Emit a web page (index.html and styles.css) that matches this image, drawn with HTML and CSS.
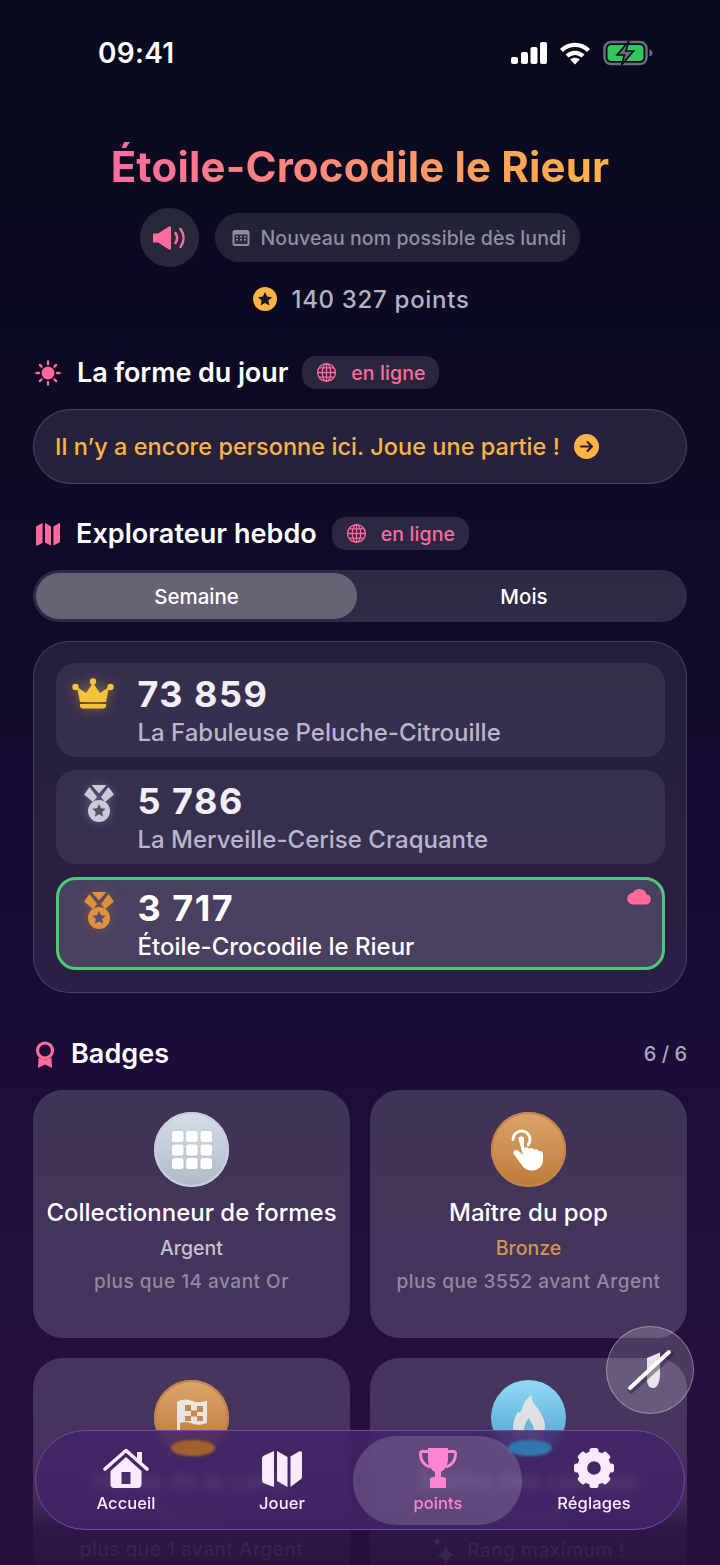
FILE: index.html
```html
<!DOCTYPE html>
<html lang="fr">
<head>
<meta charset="utf-8">
<title>Points</title>
<link rel="stylesheet" href="styles.css">
</head>
<body>
<svg class="defs" width="0" height="0" aria-hidden="true">
  <symbol id="star" viewBox="0 0 24 24"><path d="M12 1.500l3.200 6.900 7.500.9-5.600 5.100 1.500 7.400L12 18.100l-6.600 3.700 1.500-7.400L1.300 9.300l7.500-.9z"/></symbol>
  <symbol id="globe" viewBox="0 0 24 24"><g fill="none" stroke="currentColor" stroke-width="1.500"><circle cx="12" cy="12" r="10.200"/><ellipse cx="12" cy="12" rx="4.800" ry="10.200"/><path d="M12 1.800v20.400M1.800 12h20.400M3.400 6.800h17.200M3.400 17.200h17.200"/></g></symbol>
  <symbol id="medal" viewBox="0 0 30 37"><path d="M7.500 0h15L15 8.500z" fill="currentColor"/><path d="M5.500 2 13 12l-4 5-8.500-7q-.5-.5 0-1z" fill="currentColor"/><path d="M24.500 2 17 12l4 5 8.500-7q.5-.5 0-1z" fill="currentColor"/><circle cx="15" cy="26" r="11" fill="currentColor"/><use href="#star" x="7.500" y="18" width="15" height="15" class="medal-star"/></symbol>
</svg>

<div class="app">
  <header class="status">
    <span class="time">09:41</span>
    <div class="status-icons">
      <svg width="36" height="22" viewBox="0 0 36 22" fill="#fff"><rect x="0" y="15" width="7" height="7" rx="2"/><rect x="10" y="10" width="7" height="12" rx="2"/><rect x="19.500" y="5" width="7" height="17" rx="2"/><rect x="29" y="0" width="7" height="22" rx="2"/></svg>
      <svg width="32" height="24" viewBox="0 0 32 24"><g fill="none" stroke="#fff" stroke-width="4.300" stroke-linecap="butt"><path d="M2.500 9.500C10 2 22 2 29.500 9.500"/><path d="M8 15c4.500-4.300 11.500-4.300 16 0"/></g><path d="M16 23.500l-4.800-5c2.800-2.400 6.800-2.400 9.600 0z" fill="#fff"/></svg>
      <svg width="50" height="26" viewBox="0 0 50 26"><rect x="1.500" y="2" width="42" height="22" rx="6.500" fill="none" stroke="#6b6e78" stroke-width="2.500"/><rect x="4.500" y="5" width="36" height="16" rx="4" fill="#34c759"/><path d="M46.500 9.500c2 .6 3 2 3 3.500s-1 2.900-3 3.500z" fill="#6b6e78"/><path d="M26 1l-12 14h7.500l-3 10 12-14h-7.500z" fill="#6a6c74" stroke="#0a0a1e" stroke-width="1.600"/></svg>
    </div>
  </header>

  <main class="main">
    <h1 class="title">Étoile-Crocodile le Rieur</h1>

    <div class="name-row">
      <div class="sound">
        <svg width="33" height="26" viewBox="0 0 33 26"><path d="M1 8.500h4L16 1.500c1-.6 2 0 2 1.200v20.600c0 1.200-1 1.800-2 1.200L5 17.500H1c-.6 0-1-.4-1-1v-7c0-.6.400-1 1-1z" fill="#ff6b9d"/><g fill="none" stroke="#ff6b9d" stroke-width="2.600" stroke-linecap="round"><path d="M22.500 8c2 3 2 7 0 10"/><path d="M27.500 4c4 5.500 4 12.500 0 18"/></g></svg>
      </div>
      <div class="name-pill">
        <svg class="cal" width="18" height="18" viewBox="0 0 18 18"><rect x="0.500" y="1" width="17" height="16" rx="2.500" fill="#8d8d9e"/><rect x="2.500" y="5.500" width="13" height="9.500" fill="#2c2a40"/><g fill="#8d8d9e"><rect x="4" y="7" width="2" height="1.500"/><rect x="8" y="7" width="2" height="1.500"/><rect x="12" y="7" width="2" height="1.500"/><rect x="4" y="10" width="2" height="1.500"/><rect x="8" y="10" width="2" height="1.500"/><rect x="12" y="10" width="2" height="1.500"/></g></svg>
        <span>Nouveau nom possible dès lundi</span>
      </div>
    </div>

    <div class="points">
      <span class="coin"><svg width="16" height="16"><use href="#star" width="16" height="16"/></svg></span>
      <span>140 327 points</span>
    </div>

    <section class="sec-head sec-first">
      <svg class="sec-icon" width="26" height="26" viewBox="0 0 26 26"><circle cx="13" cy="13" r="6.500" fill="#ff6b9d"/><g stroke="#ff6b9d" stroke-width="2.400" stroke-linecap="round"><path d="M13 1.500v2.500M13 22v2.500M1.500 13H4M22 13h2.500M4.900 4.900l1.700 1.700M19.400 19.400l1.700 1.700M4.900 21.100l1.700-1.700M19.400 6.600l1.700-1.700"/></g></svg>
      <h2>La forme du jour</h2>
      <span class="online"><svg width="21" height="21"><use href="#globe" width="21" height="21"/></svg><span>en ligne</span></span>
    </section>

    <div class="banner">
      <span>Il n’y a encore personne ici. Joue une partie !</span>
      <span class="go"><svg width="15" height="15" viewBox="0 0 15 15" fill="none" stroke="#241a30" stroke-width="2" stroke-linecap="round" stroke-linejoin="round"><path d="M2 7.500h11M8.500 3l4.500 4.500L8.500 12"/></svg></span>
    </div>

    <section class="sec-head sec-second">
      <svg class="sec-icon map-icon" width="26" height="24" viewBox="0 0 26 24" fill="#ff6b9d"><path d="M1 4.500 7.600 1v19.800L2.500 23.500c-.8.400-1.500 0-1.500-.9z"/><path d="M10 1l6 3.500v19L10 20.500z"/><path d="M18.400 4.500 25 .8v18.500c0 .6-.2 1-.8 1.300l-5.800 3z"/></svg>
      <h2>Explorateur hebdo</h2>
      <span class="online"><svg width="21" height="21"><use href="#globe" width="21" height="21"/></svg><span>en ligne</span></span>
    </section>

    <div class="segment">
      <span class="seg seg-on">Semaine</span>
      <span class="seg seg-off">Mois</span>
    </div>

    <div class="board">
      <div class="rank">
        <span class="rank-icon"><svg class="crown" width="42" height="32" viewBox="0 0 42 32"><path d="M5 9l9 6 7-10 7 10 9-6-3 15H8z" fill="#f5c33b"/><circle cx="3.500" cy="9" r="3.200" fill="#f5c33b"/><circle cx="21" cy="3.500" r="3.200" fill="#f5c33b"/><circle cx="38.500" cy="9" r="3.200" fill="#f5c33b"/><path d="M8 26h26v1.500c0 2-1 3-3 3H11c-2 0-3-1-3-3z" fill="#f5c33b"/></svg></span>
        <div class="rank-text"><div class="score">73 859</div><div class="who">La Fabuleuse Peluche-Citrouille</div></div>
      </div>
      <div class="rank">
        <span class="rank-icon"><svg class="medal silver" width="30" height="37"><use href="#medal" width="30" height="37"/></svg></span>
        <div class="rank-text"><div class="score">5 786</div><div class="who">La Merveille-Cerise Craquante</div></div>
      </div>
      <div class="rank rank-me">
        <span class="rank-icon"><svg class="medal bronze" width="30" height="37"><use href="#medal" width="30" height="37"/></svg></span>
        <div class="rank-text"><div class="score">3 717</div><div class="who who-me">Étoile-Crocodile le Rieur</div></div>
        <svg class="cloud" width="25" height="17" viewBox="0 0 25 17"><path d="M6 16.500h13.500a5.200 5.200 0 0 0 1-10.300A7.500 7.500 0 0 0 6.800 4.800 5.900 5.900 0 0 0 6 16.500z" fill="#ff6b9d"/></svg>
      </div>
    </div>

    <section class="sec-head sec-badges">
      <svg class="sec-icon" width="20" height="28" viewBox="0 0 20 28"><circle cx="10" cy="9.500" r="7.500" fill="none" stroke="#ff6b9d" stroke-width="3.200"/><path d="M3.500 16.500 3 27l7-3.500 7 3.500-.5-10.500c-4 2.500-9 2.500-13 0z" fill="#ff6b9d"/></svg>
      <h2>Badges</h2>
      <span class="count">6 / 6</span>
    </section>

    <div class="badges">
      <article class="badge">
        <div class="disc disc-silver">
          <svg width="40" height="38" viewBox="0 0 40 38" fill="#fff"><rect x="0" y="0" width="11.500" height="11" rx="2.500"/><rect x="14.200" y="0" width="11.500" height="11" rx="2.500"/><rect x="28.500" y="0" width="11.500" height="11" rx="2.500"/><rect x="0" y="13.500" width="11.500" height="11" rx="2.500"/><rect x="14.200" y="13.500" width="11.500" height="11" rx="2.500"/><rect x="28.500" y="13.500" width="11.500" height="11" rx="2.500"/><rect x="0" y="27" width="11.500" height="11" rx="2.500"/><rect x="14.200" y="27" width="11.500" height="11" rx="2.500"/><rect x="28.500" y="27" width="11.500" height="11" rx="2.500"/></svg>
        </div>
        <h3>Collectionneur de formes</h3>
        <p class="tier">Argent</p>
        <p class="hint">plus que 14 avant Or</p>
      </article>
      <article class="badge">
        <div class="disc disc-bronze">
          <svg width="38" height="43" viewBox="0 0 38 43"><path d="M3 11.500a8.500 8.500 0 1 1 15 5.500" fill="none" stroke="#fff" stroke-width="2.800" stroke-linecap="round"/><path d="M8.500 11c0-3.800 5.500-3.800 5.500 0v9.500c.5-2 4.800-1.800 5.200.8.600-2 4.600-1.700 5 1 .8-1.700 4.300-1.200 4.600 1.200.8-1.200 4.200-.7 4.200 2.500v5.500c0 6.500-4.500 11-11 11-5 0-8.500-2.300-11-6.500l-7-9.500c-2-3 1.800-6 4.500-3.500l4.500 4z" fill="#fff"/></svg>
        </div>
        <h3>Maître du pop</h3>
        <p class="tier tier-bronze">Bronze</p>
        <p class="hint">plus que 3552 avant Argent</p>
      </article>
      <article class="badge">
        <div class="disc disc-bronze">
          <svg width="32" height="40" viewBox="0 0 32 40"><path d="M1 4c5-3 10-3 15-1s10 1.500 15-.5V25c-5 2-10 2.500-15 .5s-8-1.500-12-.5V38H1z" fill="#ebe7e3"/><g fill="#c98a50"><rect x="9" y="7" width="6" height="6"/><rect x="21" y="8" width="6" height="6"/><rect x="15" y="12.500" width="6" height="6"/><rect x="9" y="18" width="6" height="5"/><rect x="21" y="18" width="6" height="5"/></g></svg>
        </div>
        <h3>Héros de la carte</h3>
        <p class="tier tier-bronze">Bronze</p>
        <p class="hint">plus que 1 avant Argent</p>
      </article>
      <article class="badge">
        <div class="disc disc-blue">
          <svg width="32" height="46" viewBox="0 0 32 46"><path d="M19 0c-5 3-9 8-10 14-1 3-2 5-4 3-3 5-5 10-5 15 0 8 7 14 16 14s16-6 16-15c0-6-3-10-5-14-3-6-9-9-8-17z" fill="#e2e3e6"/><path d="M16 23c-3 4-5 7-5 11 0 3 2 5 5 5s5-2 5-5c0-4-4-7-5-11z" fill="#6cbce4"/></svg>
        </div>
        <h3>Maître des combos</h3>
        <p class="tier tier-blue">Diamant</p>
        <p class="hint hint-max"><svg width="24" height="32" viewBox="0 0 24 32" fill="#9aa0c8"><path d="M14 9c1 6 3 9 9 11-6 2-8 5-9 11-1-6-3-9-9-11 6-2 8-5 9-11z"/><path d="M5 1c.5 3 1.500 4.500 4.500 5.500C6.500 7.500 5.500 9 5 12c-.5-3-1.500-4.500-4.500-5.500C3.500 5.500 4.500 4 5 1z"/></svg>Rang maximum !</p>
      </article>
    </div>
  </main>
</div>

<div class="fade"></div>

<button class="fab" type="button" aria-label="Son coupé">
  <svg width="52" height="54" viewBox="0 0 52 54"><path d="M23 15 36 9.500V30c0 8-2 14-6 15-4 0-6-1-7-7z" fill="#e8e4ec"/><path d="M7 47 47 11" stroke="#2a2036" stroke-width="7" stroke-linecap="round" opacity=".45"/><path d="M6 45 45 9" stroke="#fff" stroke-width="4" stroke-linecap="round"/></svg>
</button>

<nav class="nav">
  <span class="lens lens-orange"></span>
  <span class="lens lens-blue"></span>
  <a class="tab">
    <svg width="46" height="40" viewBox="0 0 46 40" fill="#fbeaff"><path d="M7.500 23 23 9l15.500 14v13.500c0 2-1.500 3.500-3.500 3.500H11c-2 0-3.500-1.500-3.500-3.500zM18.500 24v12h9V24z" fill-rule="evenodd"/><path d="M2 21 23 2.500 44 21" fill="none" stroke="#fbeaff" stroke-width="3.600" stroke-linecap="round" stroke-linejoin="round"/><rect x="34" y="4" width="5" height="11"/></svg>
    <span>Accueil</span>
  </a>
  <a class="tab">
    <svg width="40" height="38" viewBox="0 0 40 38" fill="#fbeaff"><path d="M12 1v36l-9.500-3.500c-1.500-.5-2.500-1.500-2.500-3V9c0-1.500.5-2.500 2-3.500z"/><path d="M15 1l10.500 6v30L15 31z"/><path d="M28.500 6.500 37 1.500c1.500-.8 3-.2 3 1.500v23.500c0 1.500-.8 2.500-2 3.300L28.500 37z"/></svg>
    <span>Jouer</span>
  </a>
  <a class="tab tab-on">
    <svg width="38" height="41" viewBox="0 0 38 41" fill="#ff85d0"><path d="M9 1h20v11c0 6-3 11-7 13v6h-6v-6C12 23 9 18 9 12z"/><path d="M9 4.500H3.500C2 4.500 1.500 5.500 1.500 7c0 6 3 11 9.500 13M29 4.500h5.500c1.500 0 2 1 2 2.500 0 6-3 11-9.500 13" fill="none" stroke="#ff85d0" stroke-width="3"/><path d="M11 33c0-2 1-3 3-3h10c2 0 3 1 3 3v8H11z"/></svg>
    <span>points</span>
  </a>
  <a class="tab">
    <svg width="44" height="40" viewBox="-22 -20 44 40" fill="#fbeaff"><circle r="11.800" fill="none" stroke="#fbeaff" stroke-width="10"/><g><rect x="-4.500" y="-20" width="9" height="8" rx="2.500"/><rect x="-4.500" y="12" width="9" height="8" rx="2.500"/><rect x="-4.500" y="-20" width="9" height="8" rx="2.500" transform="rotate(45)"/><rect x="-4.500" y="-20" width="9" height="8" rx="2.500" transform="rotate(90)"/><rect x="-4.500" y="-20" width="9" height="8" rx="2.500" transform="rotate(135)"/><rect x="-4.500" y="-20" width="9" height="8" rx="2.500" transform="rotate(225)"/><rect x="-4.500" y="-20" width="9" height="8" rx="2.500" transform="rotate(270)"/><rect x="-4.500" y="-20" width="9" height="8" rx="2.500" transform="rotate(315)"/></g></svg>
    <span>Réglages</span>
  </a>
</nav>
</body>
</html>
```

FILE: styles.css
```css
* { box-sizing: border-box; }
html, body { margin: 0; padding: 0; }
body {
  position: relative;
  width: 720px;
  height: 1565px;
  overflow: hidden;
  font-family: Inter, "Noto Sans", sans-serif;
  color: #fff;
  background: linear-gradient(180deg, #090a1e 0%, #0c0a24 25%, #130b2e 45%, #1b0d38 68%, #2a1042 100%);
}
.defs { position: absolute; }

.status {
  height: 106px;
  display: flex;
  justify-content: space-between;
  align-items: center;
  padding: 0 67px 0 98px;
}
.time { font-size: 28px; font-weight: 600; letter-spacing: 0.3px; }
.status-icons { display: flex; align-items: center; gap: 12px; }

.main { padding: 0 33px; }

.title {
  margin: 36px 0 0;
  height: 50px;
  font-size: 42px;
  line-height: 50px;
  font-weight: 700;
  text-align: center;
  letter-spacing: 0.15px;
  white-space: nowrap;
  background: linear-gradient(90deg, #ff6b9d 12%, #ffb347 88%);
  -webkit-background-clip: text;
  background-clip: text;
  color: transparent;
}

.name-row {
  margin-top: 16px;
  height: 59px;
  display: flex;
  justify-content: center;
  align-items: center;
  gap: 16px;
  padding-right: 1px;
}
.sound {
  width: 59px;
  height: 59px;
  border-radius: 50%;
  background: rgba(255, 255, 255, 0.12);
  display: flex;
  align-items: center;
  justify-content: center;
}
.name-pill {
  height: 49px;
  width: 365px;
  border-radius: 25px;
  background: rgba(255, 255, 255, 0.1);
  display: flex;
  align-items: center;
  gap: 11px;
  padding-left: 17px;
  color: #8f8f9f;
  font-size: 19.5px;
  letter-spacing: 0.1px;
  font-weight: 500;
}
.name-pill span { padding-top: 1px; }
.cal { flex: none; }

.points {
  margin-top: 17px;
  height: 30px;
  display: flex;
  justify-content: center;
  align-items: center;
  gap: 14px;
  padding-left: 3px;
  font-size: 24px;
  letter-spacing: 0.7px;
  font-weight: 500;
  color: #b4b2c0;
}
.coin {
  width: 24px;
  height: 24px;
  border-radius: 50%;
  background: #ffb347;
  display: flex;
  align-items: center;
  justify-content: center;
  color: #1a1428;
  fill: #1a1428;
}

.sec-head { height: 33px; display: flex; align-items: center; }
.sec-head h2 { margin: 0; font-size: 27px; font-weight: 600; letter-spacing: 0.05px; }
.sec-first { margin-top: 42px; }
.sec-first h2 { letter-spacing: -0.1px; }
.sec-first .online { margin-left: 14px; }
.sec-second { margin-top: 33px; }
.sec-badges { margin-top: 45px; }
.sec-badges h2 { margin-bottom: 2px; }
.sec-icon { flex: none; margin-right: 16px; margin-left: 2px; }
.map-icon { margin-right: 15px; }

.online {
  margin-left: 15px;
  height: 33px;
  width: 137px;
  border-radius: 14px;
  background: rgba(255, 255, 255, 0.12);
  display: flex;
  align-items: center;
  gap: 14px;
  padding-left: 14px;
  color: #ff6b9d;
  font-size: 19.5px;
  letter-spacing: 0.1px;
  font-weight: 500;
}
.online span { padding-top: 1px; }
.count { margin-left: auto; margin-bottom: 2px; font-size: 20px; font-weight: 500; color: #aaa8b8; }

.banner {
  margin-top: 20px;
  height: 75px;
  border-radius: 38px;
  border: 1.5px solid rgba(255, 255, 255, 0.16);
  background: rgba(255, 255, 255, 0.1);
  display: flex;
  align-items: center;
  gap: 14px;
  padding-left: 21px;
  color: #ffb347;
  font-size: 23.5px;
  letter-spacing: 0.04px;
  font-weight: 500;
}
.go {
  width: 25px;
  height: 25px;
  border-radius: 50%;
  background: #ffb347;
  display: flex;
  align-items: center;
  justify-content: center;
}

.segment {
  margin-top: 20px;
  height: 52px;
  border-radius: 26px;
  background: rgba(255, 255, 255, 0.13);
  padding: 3px;
  display: flex;
}
.seg {
  flex: 1;
  border-radius: 23px;
  display: flex;
  align-items: center;
  justify-content: center;
  font-size: 20.5px;
  font-weight: 500;
}
.seg-on { flex: 0 0 321px; background: #676375; }
.seg-off { padding-left: 7px; }

.board {
  margin-top: 19px;
  height: 352px;
  border-radius: 36px;
  border: 1.5px solid rgba(255, 255, 255, 0.15);
  background: rgba(255, 255, 255, 0.08);
  padding: 21px 21.500px;
  display: flex;
  flex-direction: column;
  gap: 13px;
}
.rank {
  position: relative;
  height: 94px;
  border-radius: 20px;
  background: rgba(255, 255, 255, 0.08);
  display: flex;
  padding-left: 16px;
}
.rank-me {
  background: rgba(255, 255, 255, 0.15);
  border: 3px solid #4cc974;
  padding-left: 13px;
  height: 93px;
}
.rank-icon { width: 66px; flex: none; padding-top: 14px; display: flex; justify-content: center; }
.rank-me .rank-icon { padding-top: 11px; }
.crown { margin-left: -24px; margin-top: 1px; filter: drop-shadow(0 0 6px rgba(245, 195, 59, 0.45)); }
.medal { margin-top: 1px; margin-left: -12px; }
.medal-star { fill: #56506a; }
.silver { color: #c9cbd9; filter: drop-shadow(0 0 5px rgba(206, 209, 222, 0.3)); }
.bronze { color: #e0903f; filter: drop-shadow(0 0 6px rgba(224, 144, 63, 0.3)); }
.rank-text { padding-top: 9px; }
.rank-me .rank-text { padding-top: 6px; }
.score { font-size: 36px; line-height: 45px; font-weight: 700; letter-spacing: 1.5px; color: #f2f0f6; }
.rank-me .score { color: #fff; }
.who { font-size: 24px; line-height: 32px; font-weight: 500; color: #b9b5ca; }
.who-me { color: #fff; }
.cloud { position: absolute; top: 8px; right: 11px; }

.badges {
  margin-top: 19px;
  display: grid;
  grid-template-columns: 317px 317px;
  grid-auto-rows: 248px;
  gap: 20px;
}
.badge {
  border-radius: 30px;
  background: rgba(255, 255, 255, 0.16);
  padding-top: 22px;
  display: flex;
  flex-direction: column;
  align-items: center;
  text-align: center;
}
.disc {
  width: 75px;
  height: 75px;
  flex: none;
  border-radius: 50%;
  display: flex;
  align-items: center;
  justify-content: center;
}
.disc-silver { background: linear-gradient(180deg, #d8dde6, #aebac8); box-shadow: inset 0 0 0 2px #c7cfdb; }
.disc-bronze { background: linear-gradient(180deg, #dca46a, #bd7a3a); box-shadow: inset 0 0 0 2px #c68446; }
.disc-blue { background: linear-gradient(180deg, #92d8f6, #4ea6d4); }
.badge h3 { margin: 11px 0 0; font-size: 24px; line-height: 30px; font-weight: 500; white-space: nowrap; }
.tier { margin: 7px 0 0; font-size: 19.5px; line-height: 26px; font-weight: 500; color: #c6c2d2; }
.tier-bronze { color: #d49555; }
.tier-blue { color: #7fc8ee; }
.hint { margin: 8px 0 0; font-size: 19px; line-height: 26px; font-weight: 500; color: #8f8a9f; letter-spacing: 0.5px; white-space: nowrap; }
.hint-max { display: flex; align-items: center; gap: 11px; margin-top: 6px; }

.fade {
  position: absolute;
  left: 0;
  right: 0;
  top: 1400px;
  height: 165px;
  background: linear-gradient(180deg, rgba(37, 15, 62, 0) 0%, rgba(37, 15, 62, 0.05) 30%, rgba(37, 15, 62, 0.2) 60%, rgba(37, 15, 62, 0.78) 78%, rgba(37, 15, 62, 0.88) 100%);
}

.fab {
  position: absolute;
  left: 606px;
  top: 1326px;
  width: 88px;
  height: 88px;
  border-radius: 50%;
  border: 1.5px solid rgba(255, 255, 255, 0.32);
  background: rgba(255, 255, 255, 0.18);
  padding: 0;
  display: flex;
  align-items: center;
  justify-content: center;
}

.nav {
  position: absolute;
  left: 35px;
  top: 1430px;
  width: 650px;
  height: 100px;
  border-radius: 50px;
  border: 1.5px solid #6f4bab;
  background: rgba(66, 36, 102, 0.86);
  -webkit-backdrop-filter: blur(4px);
  backdrop-filter: blur(4px);
  display: grid;
  grid-template-columns: repeat(4, 156px);
  padding: 0 12px;
}
.tab {
  position: relative;
  display: flex;
  flex-direction: column;
  align-items: center;
  justify-content: flex-end;
  padding-bottom: 16px;
  gap: 5px;
  color: #fbeaff;
  font-size: 16.5px;
  letter-spacing: 0.1px;
  line-height: 20px;
  font-weight: 500;
}
.tab > svg, .tab > span { position: relative; }
.tab-on { color: #ff85d0; }
.tab-on::before {
  content: "";
  position: absolute;
  left: -7px;
  right: -6px;
  top: 4.500px;
  bottom: 4.500px;
  border-radius: 44px;
  background: rgba(255, 255, 255, 0.16);
}
.lens {
  position: absolute;
  top: 9px;
  width: 44px;
  height: 16px;
  border-radius: 50%;
  filter: blur(1px);
}
.lens-orange { left: 135px; background: #a3602f; }
.lens-blue { left: 472px; background: #3277ad; }
```
